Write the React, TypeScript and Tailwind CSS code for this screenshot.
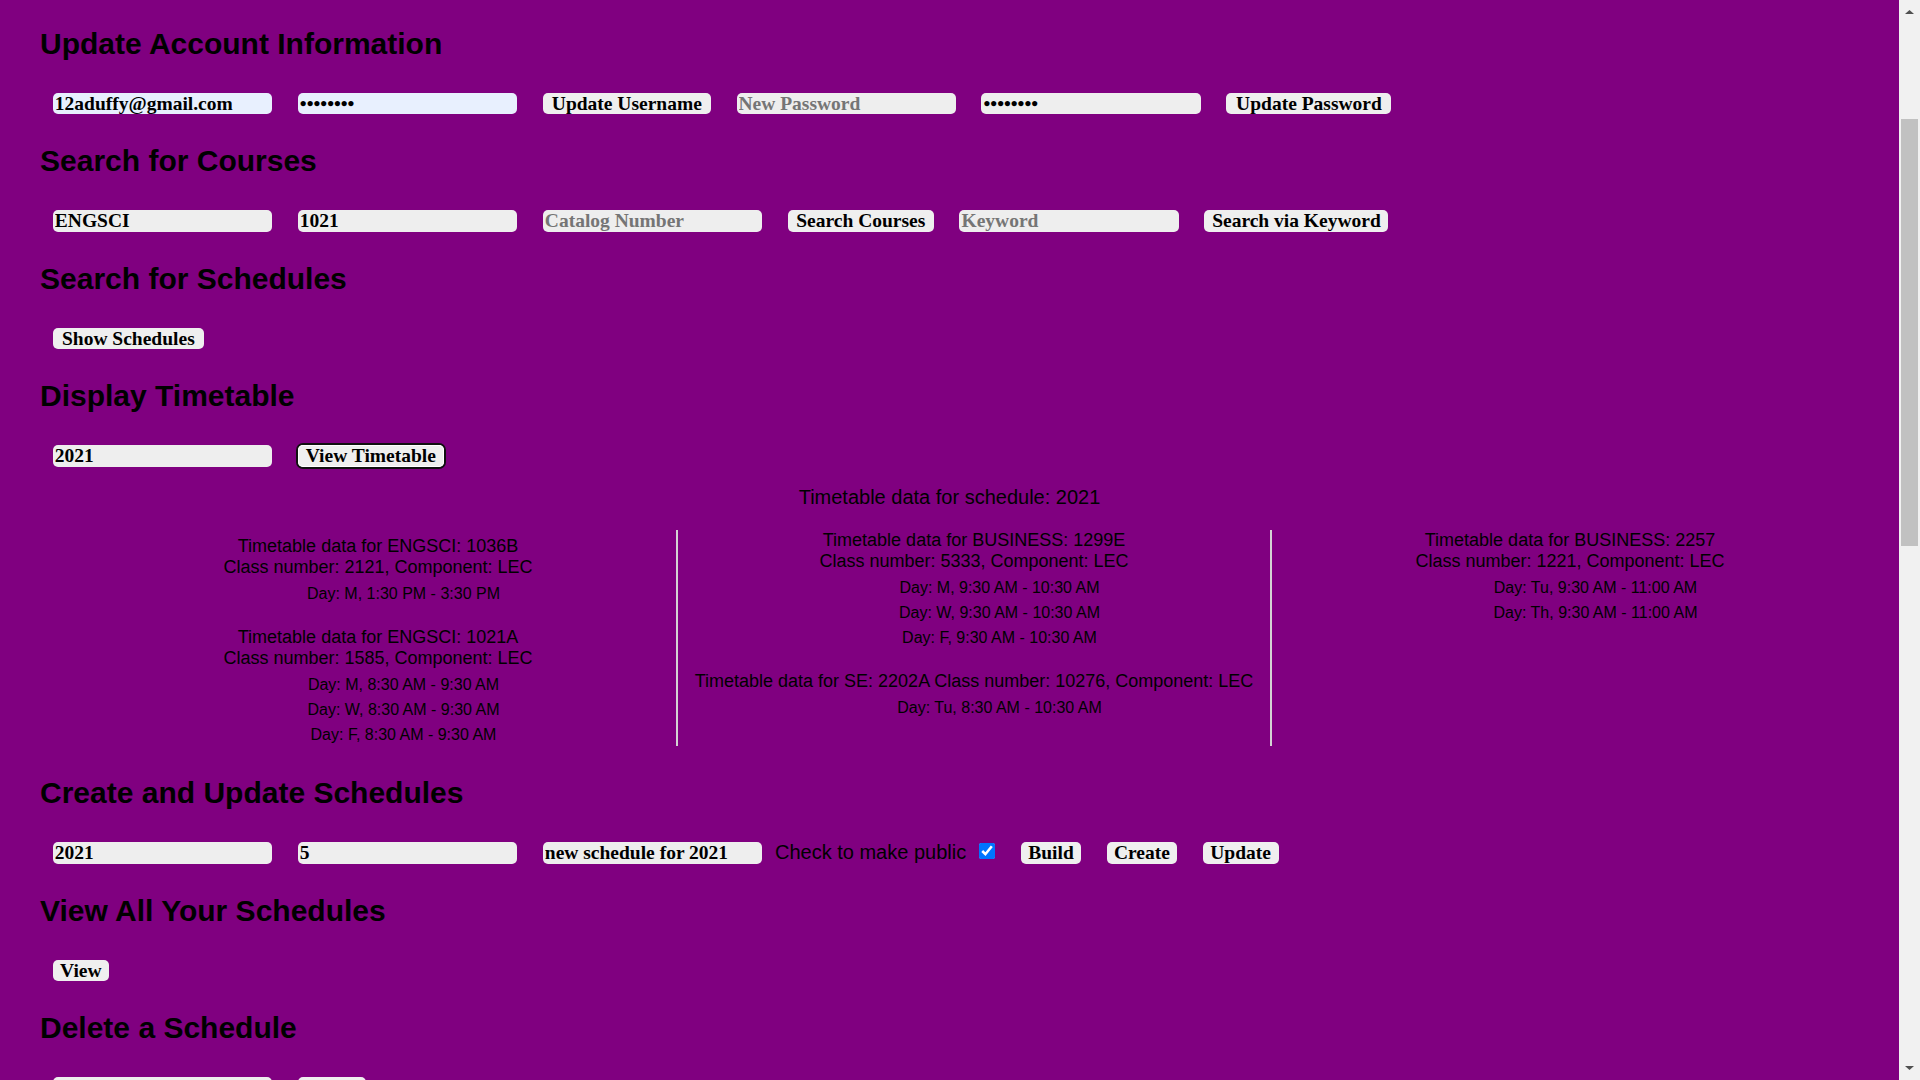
import type { ReactNode } from "react";

const field =
  "mx-[12.85px] h-[21.5px] w-[219.3px] shrink-0 rounded-[5px] px-[2px] font-['Liberation_Serif',serif] text-[19.5px] font-bold text-black outline-none placeholder:text-[#757575]";
const btn =
  "mx-[12.85px] flex h-[21.5px] shrink-0 items-center justify-center rounded-[5px] bg-[#efefef] font-['Liberation_Serif',serif] text-[19.5px] font-bold leading-none text-black";

function Section({ title, children, first }: { title: string; children: ReactNode; first?: boolean }) {
  return (
    <section className={first ? "pl-[40px]" : "mt-[30px] pl-[40px]"}>
      <h2 className="text-[30px] font-bold leading-[34px]">{title}</h2>
      <div className="mt-[32px] flex h-[21.5px] items-center">{children}</div>
    </section>
  );
}

function Block({ lines, days }: { lines: string[]; days: string[] }) {
  return (
    <div className="text-center">
      {lines.map((l) => (
        <div key={l} className="whitespace-nowrap text-[18px] leading-[21px]">
          {l}
        </div>
      ))}
      <div className="mt-[7px] flex flex-col gap-[7px] pl-[51px] text-[16px] leading-[18px]">
        {days.map((d) => (
          <div key={d}>{d}</div>
        ))}
      </div>
    </div>
  );
}

function Scrollbar() {
  return (
    <div className="flex h-screen w-[21px] shrink-0 flex-col items-center bg-[#f1f1f1]">
      <svg width="9" height="4" viewBox="0 0 9 4" className="mt-[10px] shrink-0">
        <polygon points="4.5,0 9,4 0,4" fill="#505050" />
      </svg>
      <div className="mt-[104.8px] h-[427px] w-[17px] shrink-0 bg-[#c1c1c1]" />
      <div className="flex-1" />
      <svg width="9" height="4" viewBox="0 0 9 4" className="mb-[10px] shrink-0">
        <polygon points="0,0 9,0 4.5,4" fill="#505050" />
      </svg>
    </div>
  );
}

export default function App() {
  return (
    <div className="flex h-screen overflow-hidden font-['Liberation_Sans',Arial,sans-serif] text-black">
      <main className="h-screen min-w-0 flex-1 overflow-hidden bg-[#800080] pt-[26.6px]">
        <Section title="Update Account Information" first>
          <input className={`${field} bg-[#e8f0fe]`} defaultValue="12aduffy@gmail.com" />
          <input type="password" className={`${field} bg-[#e8f0fe]`} defaultValue="password" />
          <button className={`${btn} w-[168px]`}>Update Username</button>
          <input type="password" className={`${field} bg-[#eeeeee]`} placeholder="New Password" />
          <input type="password" className={`${field} bg-[#eeeeee]`} defaultValue="password" />
          <button className={`${btn} w-[165px]`}>Update Password</button>
        </Section>

        <Section title="Search for Courses">
          <input className={`${field} bg-[#eeeeee]`} defaultValue="ENGSCI" />
          <input className={`${field} bg-[#eeeeee]`} defaultValue="1021" />
          <input className={`${field} bg-[#eeeeee]`} placeholder="Catalog Number" />
          <button className={`${btn} w-[146px]`}>Search Courses</button>
          <input className={`${field} bg-[#eeeeee]`} placeholder="Keyword" />
          <button className={`${btn} w-[184px]`}>Search via Keyword</button>
        </Section>

        <Section title="Search for Schedules">
          <button className={`${btn} w-[151px]`}>Show Schedules</button>
        </Section>

        <Section title="Display Timetable">
          <input className={`${field} bg-[#eeeeee]`} defaultValue="2021" />
          <button className={`${btn} w-[146px] shadow-[0_0_0_2px_#101010,inset_0_0_0_1px_#ffffff]`}>
            View Timetable
          </button>
        </Section>

        <p className="mt-[19px] text-center text-[20px] leading-[23px]">Timetable data for schedule: 2021</p>

        <div className="ml-[80px] mt-[21px] grid w-[1788px] grid-cols-3">
          <div className="flex flex-col gap-[24.5px] pb-[2px] pt-[6px]">
            <Block
              lines={["Timetable data for ENGSCI: 1036B", "Class number: 2121, Component: LEC"]}
              days={["Day: M, 1:30 PM - 3:30 PM"]}
            />
            <Block
              lines={["Timetable data for ENGSCI: 1021A", "Class number: 1585, Component: LEC"]}
              days={["Day: M, 8:30 AM - 9:30 AM", "Day: W, 8:30 AM - 9:30 AM", "Day: F, 8:30 AM - 9:30 AM"]}
            />
          </div>
          <div className="flex flex-col gap-[24.5px] border-x-2 border-[#d3d3d3]">
            <Block
              lines={["Timetable data for BUSINESS: 1299E", "Class number: 5333, Component: LEC"]}
              days={["Day: M, 9:30 AM - 10:30 AM", "Day: W, 9:30 AM - 10:30 AM", "Day: F, 9:30 AM - 10:30 AM"]}
            />
            <Block
              lines={["Timetable data for SE: 2202A Class number: 10276, Component: LEC"]}
              days={["Day: Tu, 8:30 AM - 10:30 AM"]}
            />
          </div>
          <div className="flex flex-col gap-[24.5px]">
            <Block
              lines={["Timetable data for BUSINESS: 2257", "Class number: 1221, Component: LEC"]}
              days={["Day: Tu, 9:30 AM - 11:00 AM", "Day: Th, 9:30 AM - 11:00 AM"]}
            />
          </div>
        </div>

        <Section title="Create and Update Schedules">
          <input className={`${field} bg-[#eeeeee]`} defaultValue="2021" />
          <input className={`${field} bg-[#eeeeee]`} defaultValue="5" />
          <input className={`${field} bg-[#eeeeee]`} defaultValue="new schedule for 2021" />
          <label className="text-[20px] leading-[23px]">Check to make public</label>
          <input
            type="checkbox"
            defaultChecked
            className="mx-[12.85px] mb-[3px] h-[16px] w-[16px] shrink-0 accent-[#0075ff]"
          />
          <button className={`${btn} w-[60.7px]`}>Build</button>
          <button className={`${btn} w-[69.8px]`}>Create</button>
          <button className={`${btn} w-[76px]`}>Update</button>
        </Section>

        <Section title="View All Your Schedules">
          <button className={`${btn} w-[56px]`}>View</button>
        </Section>

        <Section title="Delete a Schedule">
          <input className={`${field} bg-[#eeeeee]`} placeholder="Schedule Name" />
          <button className={`${btn} w-[68px]`}>Delete</button>
        </Section>
      </main>
      <Scrollbar />
    </div>
  );
}
